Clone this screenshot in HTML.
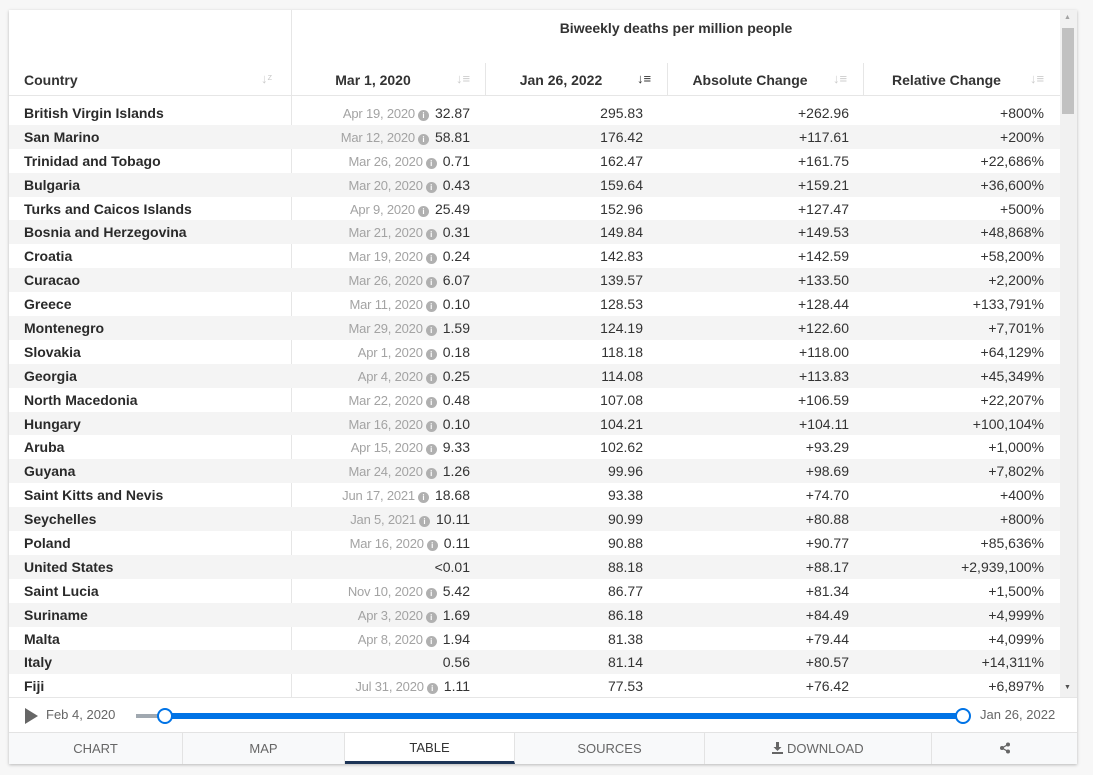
<!DOCTYPE html>
<html><head><meta charset="utf-8"><style>
*{box-sizing:border-box;margin:0;padding:0}
body{width:1093px;height:775px;background:#f7f7f7;font-family:"Liberation Sans",sans-serif;color:#333;position:relative;overflow:hidden}
.card{position:absolute;left:9px;top:10px;width:1068px;height:754px;background:#fff;box-shadow:0 1px 3px rgba(0,0,0,.25)}
.hd{position:absolute;font-size:14px;font-weight:bold;color:#333}
.vl{position:absolute;width:1px;background:#e6e6e6}
.rows{position:absolute;left:0;top:91px;width:1051px}
.r{height:23.9px;position:relative;font-size:14px;line-height:24.5px}
.r:nth-child(even){background:#f4f4f4}
.r span{position:absolute;top:0}
.c0{left:15px;font-weight:bold;color:#2a2a2a}
.c1{right:590px;color:#333}
.c1 i{font-style:normal;color:#a3a3a3;font-size:13px;letter-spacing:-.2px}
.c1 b{display:inline-block;width:11px;height:11px;border-radius:50%;background:#b0b0b0;color:#fff;font-size:8px;line-height:11px;text-align:center;margin:0 6px 0 3px;vertical-align:0}
.c2{right:417px}.c3{right:211px}.c4{right:16px}
.sort{position:absolute;font-size:11px;color:#ccc}
.tab{position:absolute;top:722px;height:32px;background:#f8f9fa;border-right:1px solid #e3e3e3;border-top:1px solid #e3e3e3;font-size:13px;color:#666;text-align:center;line-height:32px}
</style></head><body>
<div class="card">
<div class="hd" style="left:282px;width:770px;top:10px;text-align:center">Biweekly deaths per million people</div>
<div class="vl" style="left:282px;top:0;height:687px"></div>
<div class="vl" style="left:476px;top:53px;height:33px"></div>
<div class="vl" style="left:658px;top:53px;height:33px"></div>
<div class="vl" style="left:854px;top:53px;height:33px"></div>
<div style="position:absolute;left:0;top:85px;width:1051px;height:1px;background:#e6e6e6"></div>
<div class="hd" style="left:15px;top:62px">Country</div>
<div class="sort" style="left:252px;top:61px;font-size:13px">↓ᶻ</div>
<div class="hd" style="left:282px;width:194px;top:62px;text-align:center;padding-right:30px">Mar 1, 2020</div>
<div class="sort" style="left:447px;top:61px;font-size:13px">↓≡</div>
<div class="hd" style="left:476px;width:182px;top:62px;text-align:center;padding-right:30px">Jan 26, 2022</div>
<div class="sort" style="left:628px;top:61px;font-size:13px;color:#333">↓≡</div>
<div class="hd" style="left:658px;width:196px;top:62px;text-align:center;padding-right:30px">Absolute Change</div>
<div class="sort" style="left:824px;top:61px;font-size:13px">↓≡</div>
<div class="hd" style="left:854px;width:197px;top:62px;text-align:center;padding-right:30px">Relative Change</div>
<div class="sort" style="left:1021px;top:61px;font-size:13px">↓≡</div>
<div style="position:absolute;left:1051px;top:0;width:17px;height:687px;background:#f1f1f1"></div>
<div style="position:absolute;left:1053px;top:18px;width:12px;height:86px;background:#c1c1c1"></div>
<div style="position:absolute;left:1055px;top:4px;font-size:7px;color:#a3a3a3">▲</div>
<div style="position:absolute;left:1055px;top:674px;font-size:7px;color:#505050">▼</div>
<div class="rows">
<div class="r"><span class="c0">British Virgin Islands</span><span class="c1"><i>Apr 19, 2020</i><b>i</b>32.87</span><span class="c2">295.83</span><span class="c3">+262.96</span><span class="c4">+800%</span></div>
<div class="r"><span class="c0">San Marino</span><span class="c1"><i>Mar 12, 2020</i><b>i</b>58.81</span><span class="c2">176.42</span><span class="c3">+117.61</span><span class="c4">+200%</span></div>
<div class="r"><span class="c0">Trinidad and Tobago</span><span class="c1"><i>Mar 26, 2020</i><b>i</b>0.71</span><span class="c2">162.47</span><span class="c3">+161.75</span><span class="c4">+22,686%</span></div>
<div class="r"><span class="c0">Bulgaria</span><span class="c1"><i>Mar 20, 2020</i><b>i</b>0.43</span><span class="c2">159.64</span><span class="c3">+159.21</span><span class="c4">+36,600%</span></div>
<div class="r"><span class="c0">Turks and Caicos Islands</span><span class="c1"><i>Apr 9, 2020</i><b>i</b>25.49</span><span class="c2">152.96</span><span class="c3">+127.47</span><span class="c4">+500%</span></div>
<div class="r"><span class="c0">Bosnia and Herzegovina</span><span class="c1"><i>Mar 21, 2020</i><b>i</b>0.31</span><span class="c2">149.84</span><span class="c3">+149.53</span><span class="c4">+48,868%</span></div>
<div class="r"><span class="c0">Croatia</span><span class="c1"><i>Mar 19, 2020</i><b>i</b>0.24</span><span class="c2">142.83</span><span class="c3">+142.59</span><span class="c4">+58,200%</span></div>
<div class="r"><span class="c0">Curacao</span><span class="c1"><i>Mar 26, 2020</i><b>i</b>6.07</span><span class="c2">139.57</span><span class="c3">+133.50</span><span class="c4">+2,200%</span></div>
<div class="r"><span class="c0">Greece</span><span class="c1"><i>Mar 11, 2020</i><b>i</b>0.10</span><span class="c2">128.53</span><span class="c3">+128.44</span><span class="c4">+133,791%</span></div>
<div class="r"><span class="c0">Montenegro</span><span class="c1"><i>Mar 29, 2020</i><b>i</b>1.59</span><span class="c2">124.19</span><span class="c3">+122.60</span><span class="c4">+7,701%</span></div>
<div class="r"><span class="c0">Slovakia</span><span class="c1"><i>Apr 1, 2020</i><b>i</b>0.18</span><span class="c2">118.18</span><span class="c3">+118.00</span><span class="c4">+64,129%</span></div>
<div class="r"><span class="c0">Georgia</span><span class="c1"><i>Apr 4, 2020</i><b>i</b>0.25</span><span class="c2">114.08</span><span class="c3">+113.83</span><span class="c4">+45,349%</span></div>
<div class="r"><span class="c0">North Macedonia</span><span class="c1"><i>Mar 22, 2020</i><b>i</b>0.48</span><span class="c2">107.08</span><span class="c3">+106.59</span><span class="c4">+22,207%</span></div>
<div class="r"><span class="c0">Hungary</span><span class="c1"><i>Mar 16, 2020</i><b>i</b>0.10</span><span class="c2">104.21</span><span class="c3">+104.11</span><span class="c4">+100,104%</span></div>
<div class="r"><span class="c0">Aruba</span><span class="c1"><i>Apr 15, 2020</i><b>i</b>9.33</span><span class="c2">102.62</span><span class="c3">+93.29</span><span class="c4">+1,000%</span></div>
<div class="r"><span class="c0">Guyana</span><span class="c1"><i>Mar 24, 2020</i><b>i</b>1.26</span><span class="c2">99.96</span><span class="c3">+98.69</span><span class="c4">+7,802%</span></div>
<div class="r"><span class="c0">Saint Kitts and Nevis</span><span class="c1"><i>Jun 17, 2021</i><b>i</b>18.68</span><span class="c2">93.38</span><span class="c3">+74.70</span><span class="c4">+400%</span></div>
<div class="r"><span class="c0">Seychelles</span><span class="c1"><i>Jan 5, 2021</i><b>i</b>10.11</span><span class="c2">90.99</span><span class="c3">+80.88</span><span class="c4">+800%</span></div>
<div class="r"><span class="c0">Poland</span><span class="c1"><i>Mar 16, 2020</i><b>i</b>0.11</span><span class="c2">90.88</span><span class="c3">+90.77</span><span class="c4">+85,636%</span></div>
<div class="r"><span class="c0">United States</span><span class="c1">&lt;0.01</span><span class="c2">88.18</span><span class="c3">+88.17</span><span class="c4">+2,939,100%</span></div>
<div class="r"><span class="c0">Saint Lucia</span><span class="c1"><i>Nov 10, 2020</i><b>i</b>5.42</span><span class="c2">86.77</span><span class="c3">+81.34</span><span class="c4">+1,500%</span></div>
<div class="r"><span class="c0">Suriname</span><span class="c1"><i>Apr 3, 2020</i><b>i</b>1.69</span><span class="c2">86.18</span><span class="c3">+84.49</span><span class="c4">+4,999%</span></div>
<div class="r"><span class="c0">Malta</span><span class="c1"><i>Apr 8, 2020</i><b>i</b>1.94</span><span class="c2">81.38</span><span class="c3">+79.44</span><span class="c4">+4,099%</span></div>
<div class="r"><span class="c0">Italy</span><span class="c1">0.56</span><span class="c2">81.14</span><span class="c3">+80.57</span><span class="c4">+14,311%</span></div>
<div class="r"><span class="c0">Fiji</span><span class="c1"><i>Jul 31, 2020</i><b>i</b>1.11</span><span class="c2">77.53</span><span class="c3">+76.42</span><span class="c4">+6,897%</span></div>
</div>
<div style="position:absolute;left:0;top:687px;width:1068px;height:1px;background:#e6e6e6"></div>
<div style="position:absolute;left:16px;top:698px;width:0;height:0;border-left:13px solid #666;border-top:8px solid transparent;border-bottom:8px solid transparent"></div>
<div style="position:absolute;left:37px;top:697px;font-size:13px;color:#666">Feb 4, 2020</div>
<div style="position:absolute;left:127px;top:704px;width:30px;height:4px;background:#a0a8b0"></div>
<div style="position:absolute;left:157px;top:703px;width:798px;height:6px;background:#0073e6"></div>
<div style="position:absolute;left:148px;top:698px;width:16px;height:16px;border-radius:50%;background:#fff;border:2px solid #0073e6"></div>
<div style="position:absolute;left:946px;top:698px;width:16px;height:16px;border-radius:50%;background:#fff;border:2px solid #0073e6"></div>
<div style="position:absolute;left:971px;top:697px;font-size:13px;color:#666">Jan 26, 2022</div>
<div class="tab" style="left:0;width:174px">CHART</div>
<div class="tab" style="left:174px;width:162px">MAP</div>
<div class="tab" style="left:336px;width:170px;background:#fff;color:#333;border-bottom:3px solid #1d3557;line-height:30px">TABLE</div>
<div class="tab" style="left:506px;width:190px">SOURCES</div>
<div class="tab" style="left:696px;width:227px"><svg width="11" height="12" viewBox="0 0 11 12" style="vertical-align:-1px"><path d="M4 0h3v5h2.5L5.5 9 1.5 5H4z M0 10h11v2H0z" fill="#666"/></svg> DOWNLOAD</div>
<div class="tab" style="left:923px;width:145px;border-right:none"><svg width="12" height="12" viewBox="0 0 12 12" style="vertical-align:-1px"><circle cx="9" cy="2.5" r="2" fill="#666"/><circle cx="3" cy="6" r="2" fill="#666"/><circle cx="9" cy="9.5" r="2" fill="#666"/><path d="M9 2.5L3 6L9 9.5" stroke="#666" stroke-width="1.3" fill="none"/></svg></div>
</div>
</body></html>
